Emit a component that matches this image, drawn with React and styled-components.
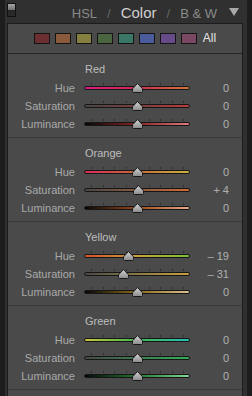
import React, { useId } from 'react';
import styled, { createGlobalStyle } from 'styled-components';

const Global = createGlobalStyle`
  html, body { margin: 0; padding: 0; background: #1d1d1d; }
  body {
    width: 252px; height: 396px; overflow: hidden;
    font-family: "Liberation Sans", Arial, sans-serif;
  }
`;

const Frame = styled.div`
  margin-left: 5px;
  width: 242px;
  height: 396px;
  background: #303030;
  display: flex;
  flex-direction: column;
`;

const Header = styled.div`
  height: 23px;
  flex: none;
  display: flex;
  align-items: flex-start;
  padding: 0 8px 0 2px;
`;

const Toggle = styled.div`
  margin-top: 3px;
  width: 9px;
  height: 14px;
  box-sizing: border-box;
  border: 1px solid #111;
  background: linear-gradient(#a4a4a4, #707070 50%, #262626 50%, #2c2c2c);
`;

const Tabs = styled.div`
  margin-left: auto;
  display: flex;
  align-items: baseline;
  gap: 10px;
  line-height: 23px;
  padding-top: 1px;
`;

const Tab = styled.span`
  font-size: ${p => (p.$active ? '15px' : '13px')};
  color: ${p => (p.$active ? '#cfcfcf' : '#8a8a8a')};
`;

const Slash = styled.span`
  font-size: 13px;
  color: #666;
`;

const Caret = styled.svg`
  margin-left: 12px;
  margin-top: 8px;
  flex: none;
`;

const Panel = styled.div`
  margin-left: 2px;
  width: 236px;
  flex: 1;
  box-sizing: border-box;
  border: 1px solid #1c1c1c;
  border-bottom: none;
  background: #4a4a4a;
  display: flex;
  flex-direction: column;
`;

const SwatchBar = styled.div`
  height: 30px;
  box-sizing: border-box;
  padding-top: 9px;
  display: flex;
  justify-content: center;
  align-items: flex-start;
  border-bottom: 1px solid #262626;
  flex: none;
`;

const Swatch = styled.div`
  width: 16px;
  height: 11px;
  box-sizing: border-box;
  border: 1px solid #141414;
  background: ${p => p.$color};
  margin-right: 5px;
`;

const AllLabel = styled.span`
  margin-left: 1px;
  font-size: 12px;
  line-height: 11px;
  color: #e4e4e4;
`;

const Section = styled.div`
  padding: 8px 0 4px;
  border-bottom: 1px solid #3a3a3a;
  flex: none;
`;

const Title = styled.div`
  padding-left: 77px;
  height: 14px;
  line-height: 14px;
  font-size: 11px;
  color: #bdbdbd;
  margin-bottom: 3px;
`;

const Row = styled.div`
  display: flex;
  height: 18px;
  align-items: center;
`;

const Label = styled.div`
  width: 67px;
  margin-right: 9px;
  text-align: right;
  font-size: 11px;
  line-height: 18px;
  color: #a9a9a9;
`;

const Slider = styled.div`
  position: relative;
  width: 106px;
  height: 18px;
`;

const Ticks = styled.div`
  position: absolute;
  top: 4px;
  left: 7px;
  right: 6px;
  height: 2px;
  display: flex;
  justify-content: space-between;
`;

const Tick = styled.div`
  width: 1px;
  height: 2px;
  background: #2f2f2f;
`;

const Track = styled.div`
  position: absolute;
  top: 7px;
  left: 0;
  right: 0;
  height: 4px;
  box-sizing: border-box;
  border: 1px solid #161616;
  border-radius: 2px;
  background: ${p => p.$gradient};
`;

const ThumbSvg = styled.svg`
  position: absolute;
  top: 4px;
  margin-left: -5.5px;
`;

const Value = styled.div`
  width: 39px;
  text-align: right;
  font-size: 11px;
  line-height: 18px;
  color: #b0b0b0;
`;

function Thumb({ value }) {
  const id = useId().replace(/:/g, '');
  return (
    <ThumbSvg width="11" height="10" viewBox="0 0 11 10" style={{ left: 53 + value * 0.44 }}>
      <defs>
        <linearGradient id={id} x1="0" y1="0" x2="0" y2="1">
          <stop offset="0" stopColor="#d4d4d4" />
          <stop offset="1" stopColor="#8a8a8a" />
        </linearGradient>
      </defs>
      <path d="M5.5 0.5 L10.5 5.8 L10.5 8.5 Q10.5 9.5 9.5 9.5 L1.5 9.5 Q0.5 9.5 0.5 8.5 L0.5 5.8 Z"
        fill={`url(#${id})`} stroke="#1a1a1a" strokeWidth="1" />
    </ThumbSvg>
  );
}

function SliderRow({ label, value, gradient }) {
  const text = value === 0 ? '0' : value > 0 ? `+ ${value}` : `– ${Math.abs(value)}`;
  return (
    <Row>
      <Label>{label}</Label>
      <Slider>
        <Ticks>
          {Array.from({ length: 9 }).map((_, i) => <Tick key={i} />)}
        </Ticks>
        <Track $gradient={gradient} />
        <Thumb value={value} />
      </Slider>
      <Value>{text}</Value>
    </Row>
  );
}

const swatches = ['#6c2f31', '#8a5a3c', '#858040', '#4a6540', '#3b7767', '#4a5c9c', '#674a88', '#7a4862'];

const sections = [
  {
    name: 'Red',
    rows: [
      ['Hue', 0, 'linear-gradient(90deg, #d61c7e, #d22a50 50%, #d0783c)'],
      ['Saturation', 0, 'linear-gradient(90deg, #4a4545, #7a3d3d 50%, #bc3c3c)'],
      ['Luminance', 0, 'linear-gradient(90deg, #080808, #8a2424 50%, #e07a7a)'],
    ],
  },
  {
    name: 'Orange',
    rows: [
      ['Hue', 0, 'linear-gradient(90deg, #d82a58, #c86a3c 50%, #c8b43c)'],
      ['Saturation', 4, 'linear-gradient(90deg, #4a4846, #8a5a40 50%, #d06c38)'],
      ['Luminance', 0, 'linear-gradient(90deg, #080808, #9a4a18 50%, #e8a888)'],
    ],
  },
  {
    name: 'Yellow',
    rows: [
      ['Hue', -19, 'linear-gradient(90deg, #d8502c, #c8a03c 50%, #7cc03c)'],
      ['Saturation', -31, 'linear-gradient(90deg, #4a4846, #8a7a48 50%, #c8a03c)'],
      ['Luminance', 0, 'linear-gradient(90deg, #080808, #8a6a18 50%, #dcc090)'],
    ],
  },
  {
    name: 'Green',
    rows: [
      ['Hue', 0, 'linear-gradient(90deg, #c8c83c, #40b850 50%, #28c0b8)'],
      ['Saturation', 0, 'linear-gradient(90deg, #464a46, #3c7a50 50%, #30b058)'],
      ['Luminance', 0, 'linear-gradient(90deg, #080808, #207a30 50%, #80d898)'],
    ],
  },
];

export default function App() {
  return (
    <>
      <Global />
      <Frame>
        <Header>
          <Toggle />
          <Tabs>
            <Tab>HSL</Tab>
            <Slash>/</Slash>
            <Tab $active>Color</Tab>
            <Slash>/</Slash>
            <Tab>B &amp; W</Tab>
          </Tabs>
          <Caret width="10" height="8" viewBox="0 0 10 8">
            <polygon points="0,0 10,0 5,8" fill="#a8a8a8" />
          </Caret>
        </Header>
        <Panel>
          <SwatchBar>
            {swatches.map(c => <Swatch key={c} $color={c} />)}
            <AllLabel>All</AllLabel>
          </SwatchBar>
          {sections.map(s => (
            <Section key={s.name}>
              <Title>{s.name}</Title>
              {s.rows.map(([l, v, g]) => (
                <SliderRow key={l} label={l} value={v} gradient={g} />
              ))}
            </Section>
          ))}
        </Panel>
      </Frame>
    </>
  );
}
